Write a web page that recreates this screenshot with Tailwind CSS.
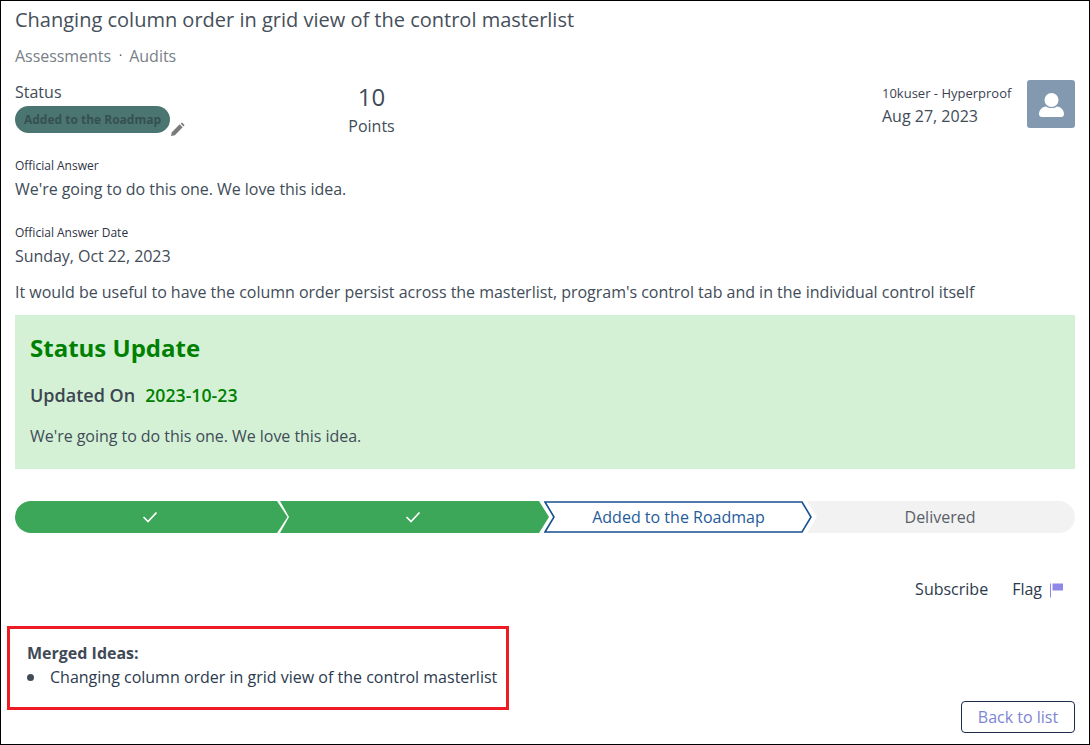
<!DOCTYPE html>
<html>
<head>
<meta charset="utf-8">
<script src="https://cdn.jsdelivr.net/npm/@tailwindcss/browser@4"></script>
</head>
<body class="m-0 bg-white">
<div class="relative w-[1090px] h-[745px] border border-black overflow-hidden bg-white px-[14px] font-['Open_Sans',sans-serif] text-[16px] text-[#414c58]">
  <h1 class="m-0 pt-[5px] h-[40px] text-[20px] leading-[27px] font-normal text-[#464f5a]">Changing column order in grid view of the control masterlist</h1>
  <div class="flex items-center h-[30px] text-[#787f87] leading-[30px]"><span class="tracking-[-0.05px]">Assessments</span><span class="ml-[8px] mr-[7px] text-[#414c58] text-[12px]">·</span><span>Audits</span></div>

  <div class="flex mt-[9px] h-[68px]">
    <div class="w-[300px] relative pt-[1px]">
      <div class="leading-[22px] h-[25px]">Status</div>
      <div class="w-[155px] h-[27px] rounded-full bg-[#4a7571] text-[#365052] text-[12px] font-bold flex items-center justify-center">Added to the Roadmap</div>
      <svg class="absolute left-[155px] top-[42px]" width="15" height="15" viewBox="0 0 16 16"><path d="M1 15 L2 10.800 L10.300 2.500 L13.500 5.700 L5.200 14 Z" fill="#7a7a7a"/><path d="M11.300 1.500 L12.800 0.500 L15.500 3.200 L14.500 4.700 Z" fill="#7a7a7a"/></svg>
    </div>
    <div class="w-[113px] text-center -mt-[1px]">
      <div class="text-[24px] leading-[32px] mt-[2px]">10</div>
      <div class="leading-[22px] mt-[2px]">Points</div>
    </div>
    <div class="flex-1 flex justify-end">
      <div class="mr-[16px] mt-[4px] w-[129px]">
        <div class="text-[13px] leading-[18px] text-[#3c3f52] whitespace-nowrap">10kuser - Hyperproof</div>
        <div class="leading-[24px] mt-[2px]">Aug 27, 2023</div>
      </div>
      <div class="w-[48px] h-[48px] rounded-[3px] bg-[#8299b0] flex items-center justify-center">
        <svg class="mt-[1px]" width="25" height="24" viewBox="0 0 25 24"><circle cx="12.500" cy="7" r="7" fill="#fff"/><path d="M0 21 C0 17 3 14 7 13.500 C10 15.500 15 15.500 18 13.500 C22 14 25 17 25 21 Q25 24 22 24 H3 Q0 24 0 21 Z" fill="#fff"/></svg>
      </div>
    </div>
  </div>

  <div class="mt-[10px] text-[12px] leading-[16px] text-[#2f3344]">Official Answer</div>
  <div class="leading-[24px] mt-[3px] tracking-[-0.04px]">We're going to do this one. We love this idea.</div>
  <div class="mt-[24px] text-[12px] leading-[16px] text-[#2f3344]">Official Answer Date</div>
  <div class="leading-[24px] mt-[3px] tracking-[-0.05px]">Sunday, Oct 22, 2023</div>
  <div class="leading-[24px] mt-[12px] tracking-[-0.023px]">It would be useful to have the column order persist across the masterlist, program's control tab and in the individual control itself</div>

  <div class="mt-[11px] h-[154px] bg-[#d4f1d6] px-[15px] pt-[16px]">
    <div class="text-[24px] leading-[34px] font-bold text-[#008000]">Status Update</div>
    <div class="flex mt-[18px] text-[18px] leading-[24px] font-semibold text-[#3b4650]"><span>Updated On</span><span class="ml-[10px] text-[#008000] text-[17.700px]">2023-10-23</span></div>
    <div class="mt-[17px] leading-[24px] tracking-[-0.04px]">We're going to do this one. We love this idea.</div>
  </div>

  <div class="flex mt-[32px] h-[32px] w-[1060px]">
    <div class="relative w-[273px] h-[32px] pr-[3px] flex items-center justify-center">
      <svg class="absolute inset-0" width="273" height="32" viewBox="0 0 273 32"><path d="M16 0 H262 L272.500 16 L262 32 H16 A16 16 0 0 1 16 0 Z" fill="#3ca758"/></svg>
      <svg class="relative" width="16" height="12" viewBox="0 0 16 12"><path d="M1.500 6 L6 10.500 L14.500 1.500" fill="none" stroke="#fff" stroke-width="1.700"/></svg>
    </div>
    <div class="relative w-[270px] h-[32px] pr-[4px] -ml-[8px] flex items-center justify-center">
      <svg class="absolute inset-0" width="270" height="32" viewBox="0 0 270 32"><path d="M0 0 H259 L269 16 L259 32 H0 L9 16 Z" fill="#3ca758" /></svg>
      <svg class="relative" width="16" height="12" viewBox="0 0 16 12"><path d="M1.500 6 L6 10.500 L14.500 1.500" fill="none" stroke="#fff" stroke-width="1.700"/></svg>
    </div>
    <div class="relative w-[269px] h-[32px] -ml-[6px] flex items-center justify-center text-[#1f5b9b]">
      <svg class="absolute inset-0" width="269" height="32" viewBox="0 0 269 32"><path d="M1 1 H258 L267 16 L258 31 H1 L10 16 Z" fill="#fff" stroke="#15508f" stroke-width="1.600"/></svg>
      <span class="relative leading-[24px] tracking-[0.01px]">Added to the Roadmap</span>
    </div>
    <div class="relative w-[268px] h-[32px] pr-[2px] -ml-[6px] flex items-center justify-center text-[#5a6068]">
      <svg class="absolute inset-0" width="268" height="32" viewBox="0 0 268 32"><path d="M0 0 H252 A16 16 0 0 1 252 32 H0 L10 16 Z" fill="#f2f2f2"/></svg>
      <span class="relative leading-[24px]">Delivered</span>
    </div>
  </div>

  <div class="flex justify-end items-center mt-[44px] h-[24px] pr-[12px] text-[#2c3a4e]">
    <span>Subscribe</span>
    <span class="ml-[24px]">Flag</span>
    <svg class="ml-[8px] mt-[2px]" width="13" height="15" viewBox="0 0 13 15"><rect x="0" y="0.500" width="1" height="14" fill="#8f88e8"/><rect x="2.500" y="0.500" width="10.500" height="7" fill="#8f88e8"/></svg>
  </div>

  <div class="flex items-start mt-[25px] -ml-[8px]">
    <div class="w-[502px] h-[84px] border-[3px] border-[#ed1c24] pl-[17px] pt-[13px]">
      <div class="font-bold leading-[22px] text-[#3f4a56]">Merged Ideas:</div>
      <ul class="m-0 p-0 list-none">
        <li class="flex items-center leading-[24px] mt-[1px] text-[#2c3a4e]"><span class="w-[7px] h-[7px] rounded-full bg-[#414c58] mr-[16px]"></span>Changing column order in grid view of the control masterlist</li>
      </ul>
    </div>
    <div class="ml-auto mr-0 mt-[75px] w-[114px] h-[32px] rounded-[4px] border border-[#1c2c4c] text-[#7c85d3] flex items-center justify-center">Back to list</div>
  </div>
</div>
</body>
</html>
